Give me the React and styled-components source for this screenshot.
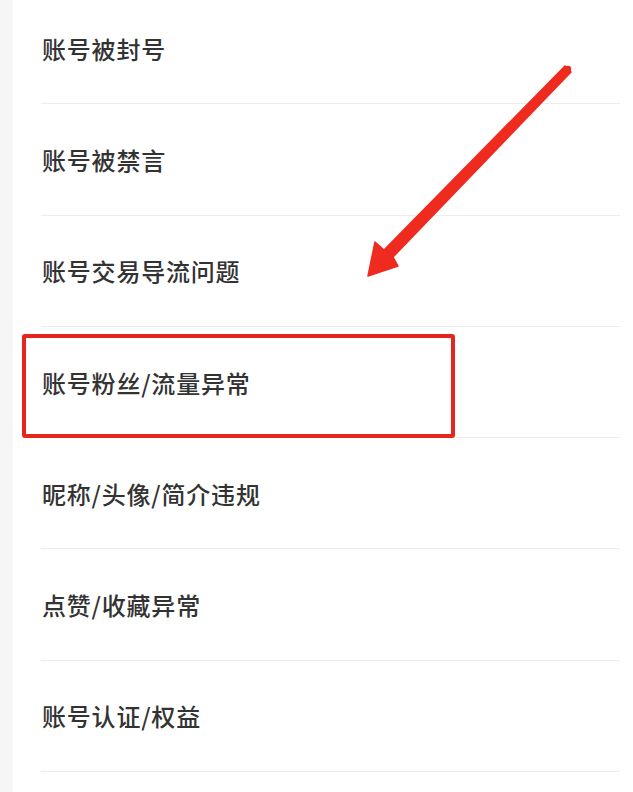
import React from "react";
import styled, { createGlobalStyle } from "styled-components";

const Global = createGlobalStyle`
  html, body { margin: 0; padding: 0; background: #ffffff; }
  body { width: 633px; height: 792px; overflow: hidden; }
`;

const Page = styled.div`
  position: relative;
  width: 633px;
  height: 792px;
  overflow: hidden;
  display: flex;
  background: #ffffff;
  font-family: "Noto Sans CJK SC", "Noto Sans", sans-serif;
`;

const Rail = styled.div`
  width: 13px;
  flex: none;
  background: #f6f6f6;
`;

const List = styled.ul`
  list-style: none;
  margin: -7px 0 0 28px;
  padding: 0;
  width: 579px;
  display: flex;
  flex-direction: column;
`;

const Row = styled.li`
  height: 110.3px;
  flex: none;
  display: flex;
  align-items: center;
  padding-left: 1px;
  border-bottom: 1.33px solid #ececec;
  font-size: 24px;
  font-weight: 500;
  letter-spacing: 0.8px;
  color: #333333;
  box-sizing: content-box;
`;

const Highlight = styled.div`
  position: absolute;
  left: 22px;
  top: 334px;
  width: 433px;
  height: 104px;
  box-sizing: border-box;
  border: 4px solid #e5261d;
  border-radius: 3px;
  pointer-events: none;
`;

const Arrow = styled.svg`
  position: absolute;
  left: 0;
  top: 0;
  width: 633px;
  height: 792px;
  pointer-events: none;
`;

const items = [
  "账号被封号",
  "账号被禁言",
  "账号交易导流问题",
  "账号粉丝/流量异常",
  "昵称/头像/简介违规",
  "点赞/收藏异常",
  "账号认证/权益",
  "",
];

export default function App() {
  return (
    <>
      <Global />
      <Page>
        <Rail />
        <List>
          {items.map((t, i) => (
            <Row key={i}>{t}</Row>
          ))}
        </List>
        <Highlight />
        <Arrow viewBox="0 0 633 792">
          <path
            d="M565 66 Q569 70 571 72 L393 257 L398 266 L368 276 L375 242 L384 250 Z"
            fill="#ef2a1e"
            stroke="#ef2a1e"
            strokeWidth="1.5"
            strokeLinejoin="round"
          />
          <circle cx="568" cy="69" r="3.2" fill="#ef2a1e" />
        </Arrow>
      </Page>
    </>
  );
}
